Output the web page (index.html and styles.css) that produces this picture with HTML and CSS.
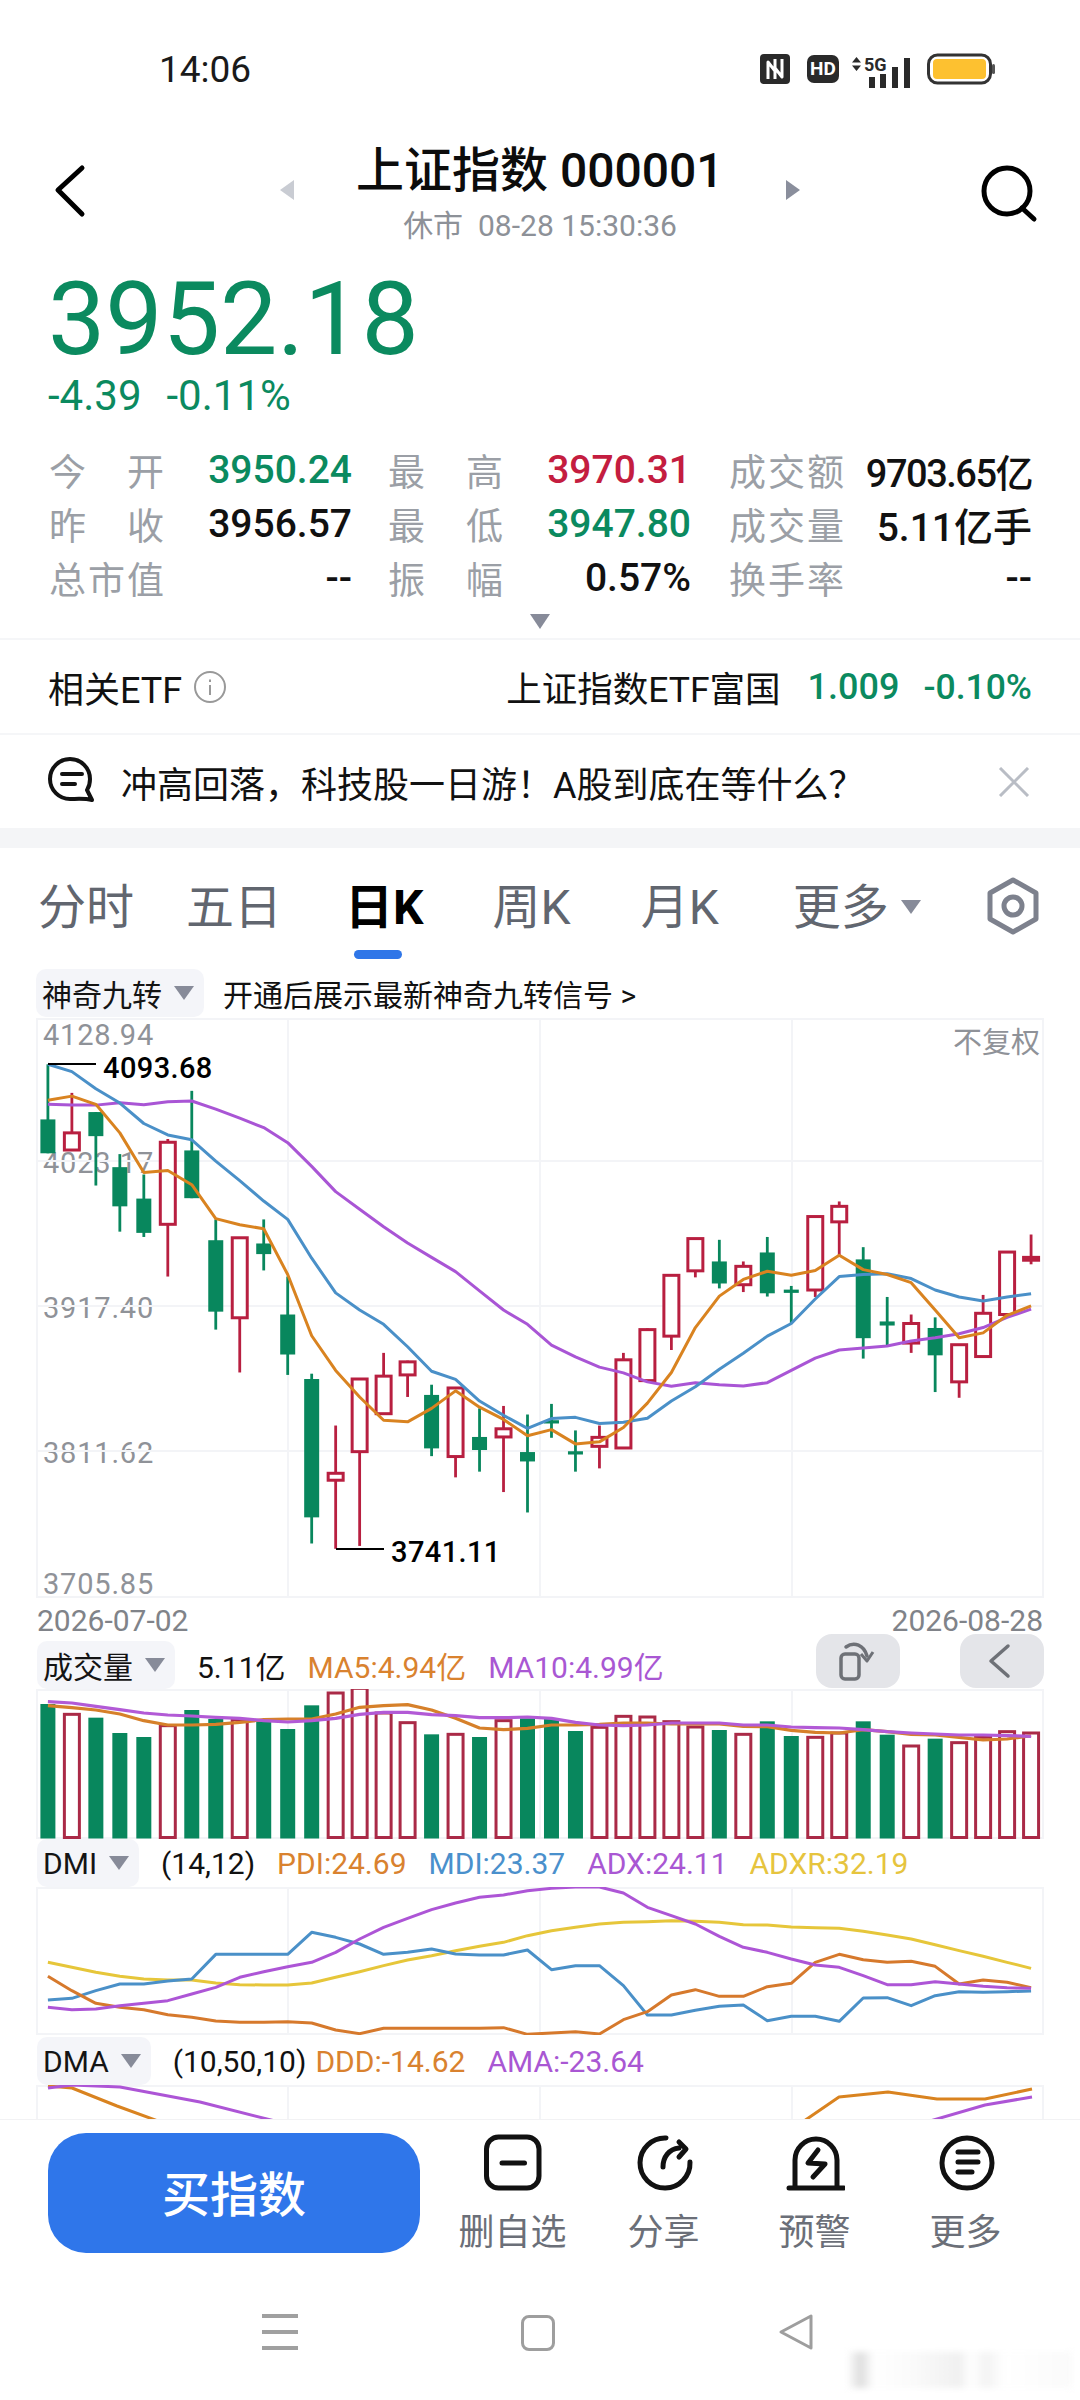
FILE: index.html
```html
<!DOCTYPE html>
<html lang="zh-CN">
<head>
    <meta charset="UTF-8">
    <meta name="viewport" content="width=device-width, initial-scale=1.0">
    <title>上证指数 000001</title>
    <link rel="stylesheet" href="styles.css">
</head>
<body>
    <div class="page">
        <div class="status">
            <span class="status-time">14:06</span>
            <div class="status-icons">
                <svg class="ic-nfc" width="30" height="30" viewBox="0 0 30 30">
                    <rect width="30" height="30" rx="4" fill="#2a2a2a"/>
                    <path d="M8 25V8l7 9V5M15 25V14l7 9V5" fill="none" stroke="#fff" stroke-width="3" stroke-linejoin="round"/>
                </svg>
                <span class="ic-hd">HD</span>
                <svg class="ic-signal" width="60" height="38" viewBox="0 -6 60 38">
                    <path d="M1 6.500L5.500 1 10 6.500zM1 9.500L5.500 15 10 9.500z" fill="#2a2a2a"/>
                    <text class="signal-text" x="13" y="15">5G</text>
                    <rect x="18" y="21" width="6" height="11" fill="#2a2a2a"/>
                    <rect x="29" y="18" width="6" height="14" fill="#2a2a2a"/>
                    <rect x="41" y="11" width="6" height="21" fill="#2a2a2a"/>
                    <rect x="53" y="2" width="6" height="30" fill="#2a2a2a"/>
                </svg>
                <svg class="ic-battery" width="68" height="32" viewBox="0 0 68 32">
                    <rect x="1.500" y="2" width="62" height="28" rx="9" fill="none" stroke="#333" stroke-width="3"/>
                    <rect x="6" y="6" width="53" height="20" rx="4" fill="#fdc130"/>
                    <rect x="65" y="11" width="3" height="10" rx="1.500" fill="#555"/>
                </svg>
            </div>
        </div>

        <div class="nav">
            <svg class="nav-back" width="40" height="56" viewBox="0 0 40 56">
                <path d="M32 5L8 27l24 24" fill="none" stroke="#000" stroke-width="5" stroke-linecap="round" stroke-linejoin="round"/>
            </svg>
            <div class="nav-mid">
                <span class="arrow-left"></span>
                <div class="nav-titles">
                    <div class="nav-title">上证指数 000001</div>
                    <div class="nav-sub">休市&nbsp; 08-28 15:30:36</div>
                </div>
                <span class="arrow-right"></span>
            </div>
            <svg class="nav-search" width="60" height="60" viewBox="0 0 60 60">
                <circle cx="27" cy="27" r="23" fill="none" stroke="#000" stroke-width="5"/>
                <path d="M42 44l12 11" fill="none" stroke="#000" stroke-width="5" stroke-linecap="round"/>
            </svg>
        </div>

        <div class="quote">
            <div class="quote-price">3952.18</div>
            <div class="quote-change"><span>-4.39</span><span>-0.11%</span></div>
        </div>

        <div class="stats">
            <div class="stat"><span class="stat-label">今 开</span><span class="stat-value green">3950.24</span></div>
            <div class="stat"><span class="stat-label">最 高</span><span class="stat-value red">3970.31</span></div>
            <div class="stat"><span class="stat-label">成交额</span><span class="stat-value stat-squeezed">9703.65亿</span></div>
            <div class="stat"><span class="stat-label">昨 收</span><span class="stat-value">3956.57</span></div>
            <div class="stat"><span class="stat-label">最 低</span><span class="stat-value green">3947.80</span></div>
            <div class="stat"><span class="stat-label">成交量</span><span class="stat-value">5.11亿手</span></div>
            <div class="stat"><span class="stat-label">总市值</span><span class="stat-value">--</span></div>
            <div class="stat"><span class="stat-label">振 幅</span><span class="stat-value">0.57%</span></div>
            <div class="stat"><span class="stat-label">换手率</span><span class="stat-value">--</span></div>
        </div>
        <div class="stats-more"><span class="tri tri-big"></span></div>

        <div class="etf">
            <span class="etf-label">相关ETF</span>
            <svg class="etf-info" width="34" height="34" viewBox="0 0 34 34">
                <circle cx="17" cy="17" r="15" fill="none" stroke="#999" stroke-width="2"/>
                <path d="M17 15v10M17 9.500v2.500" fill="none" stroke="#999" stroke-width="2"/>
            </svg>
            <span class="etf-name">上证指数ETF富国</span>
            <span class="etf-num green">1.009</span>
            <span class="etf-num etf-pct green">-0.10%</span>
        </div>

        <div class="news">
            <svg class="news-icon" width="48" height="48" viewBox="0 0 48 48">
                <path d="M44 23A20 20 0 1 0 24 43C30 43 38 42 46 44L41 34C43 31 44 27 44 23Z" fill="none" stroke="#111" stroke-width="4" stroke-linejoin="round"/>
                <path d="M16 18h20M16 28h13" fill="none" stroke="#111" stroke-width="4" stroke-linecap="round"/>
            </svg>
            <span class="news-text">冲高回落，科技股一日游！A股到底在等什么？</span>
            <svg class="news-close" width="32" height="30" viewBox="0 0 32 30">
                <path d="M2 1l28 28M30 1L2 29" fill="none" stroke="#b9bdc5" stroke-width="3"/>
            </svg>
        </div>

        <div class="band"></div>

        <div class="tabs">
            <span class="tab">分时</span>
            <span class="tab">五日</span>
            <span class="tab tab-active">日K</span>
            <span class="tab">周K</span>
            <span class="tab">月K</span>
            <span class="tab">更多<span class="tri tri-tab"></span></span>
            <svg class="tab-gear" width="56" height="60" viewBox="0 0 56 60">
                <path d="M28 4l23 13v26L28 56 5 43V17z" fill="none" stroke="#7d818d" stroke-width="5" stroke-linejoin="round"/>
                <circle cx="28" cy="30" r="9" fill="none" stroke="#7d818d" stroke-width="5"/>
            </svg>
        </div>

        <div class="signal">
            <span class="chip chip-signal">神奇九转<span class="tri"></span></span>
            <span class="signal-note">开通后展示最新神奇九转信号 &gt;</span>
        </div>

        <div class="chart">
            <span class="axis axis-1">4128.94</span>
            <span class="axis axis-2">4023.17</span>
            <span class="axis axis-3">3917.40</span>
            <span class="axis axis-4">3811.62</span>
            <span class="axis axis-5">3705.85</span>
            <svg id="priceChart" class="panel-svg chart-svg" width="1008" height="580"></svg>
            <span class="mark mark-high">4093.68</span>
            <span class="mark mark-low">3741.11</span>
            <span class="chart-adjust">不复权</span>
        </div>

        <div class="dates"><span>2026-07-02</span><span>2026-08-28</span></div>

        <div class="ind-head">
            <span class="chip">成交量<span class="tri"></span></span>
            <span class="ind-val">5.11亿</span>
            <span class="c-orange">MA5:4.94亿</span>
            <span class="c-purple">MA10:4.99亿</span>
            <div class="ind-tools">
                <span class="tool">
                    <svg width="44" height="44" viewBox="0 0 44 44">
                        <rect x="5" y="15" width="18" height="25" rx="4" fill="none" stroke="#6e7177" stroke-width="3.500"/>
                        <path d="M10 8C18 2 28 6 31 17" fill="none" stroke="#6e7177" stroke-width="3.500" stroke-linecap="round"/>
                        <path d="M25 15l6 7 6-9" fill="none" stroke="#6e7177" stroke-width="3" stroke-linejoin="round"/>
                    </svg>
                </span>
                <span class="tool">
                    <svg width="44" height="44" viewBox="0 0 44 44">
                        <path d="M28 7L11 22l17 15" fill="none" stroke="#6e7177" stroke-width="3.500" stroke-linecap="round" stroke-linejoin="round"/>
                    </svg>
                </span>
            </div>
        </div>
        <svg id="volChart" class="panel-svg" width="1008" height="150"></svg>

        <div class="ind-head">
            <span class="chip">DMI<span class="tri"></span></span>
            <span class="ind-val">(14,12)</span>
            <span class="c-orange">PDI:24.69</span>
            <span class="c-blue">MDI:23.37</span>
            <span class="c-purple">ADX:24.11</span>
            <span class="c-yellow">ADXR:32.19</span>
        </div>
        <svg id="dmiChart" class="panel-svg" width="1008" height="148"></svg>

        <div class="ind-head ind-dma">
            <span class="chip">DMA<span class="tri"></span></span>
            <span class="ind-val">(10,50,10)</span>
            <span class="c-orange">DDD:-14.62</span>
            <span class="c-purple">AMA:-23.64</span>
        </div>
        <div class="dma-clip">
            <svg id="dmaChart" class="panel-svg" width="1008" height="150"></svg>
        </div>

        <div class="actions">
            <button class="buy">买指数</button>
            <div class="action">
                <svg width="60" height="60" viewBox="0 0 60 60">
                    <rect x="3.500" y="4" width="52.500" height="51" rx="12" fill="none" stroke="#111" stroke-width="5"/>
                    <path d="M19 30h22.500" fill="none" stroke="#111" stroke-width="5" stroke-linecap="round"/>
                </svg>
                <span>删自选</span>
            </div>
            <div class="action">
                <svg width="60" height="60" viewBox="0 0 60 60">
                    <path d="M32 5A25 25 0 1 0 56 29" fill="none" stroke="#111" stroke-width="5" stroke-linecap="round"/>
                    <path d="M29 34C29 24 35 16 45 15M45 9l7 7-7 8" fill="none" stroke="#111" stroke-width="5" stroke-linecap="round" stroke-linejoin="round"/>
                </svg>
                <span>分享</span>
            </div>
            <div class="action">
                <svg width="60" height="60" viewBox="0 0 60 60">
                    <path d="M10 55V27A21 21 0 0 1 52 27V55" fill="none" stroke="#111" stroke-width="5"/>
                    <path d="M4 55H59" fill="none" stroke="#111" stroke-width="5" stroke-linecap="round"/>
                    <path d="M33 17L23 30L40 31L28 44" fill="none" stroke="#111" stroke-width="5" stroke-linecap="round" stroke-linejoin="round"/>
                </svg>
                <span>预警</span>
            </div>
            <div class="action">
                <svg width="60" height="60" viewBox="0 0 60 60">
                    <circle cx="31" cy="30" r="25" fill="none" stroke="#111" stroke-width="5"/>
                    <path d="M22 19h20M22 29h20M22 39h14" fill="none" stroke="#111" stroke-width="5" stroke-linecap="round"/>
                </svg>
                <span>更多</span>
            </div>
        </div>

        <div class="sysnav">
            <span class="sys-menu"></span>
            <span class="sys-home"></span>
            <svg class="sys-back" width="36" height="38" viewBox="0 0 36 38">
                <path d="M33 3V35L3 19z" fill="none" stroke="#9e9e9e" stroke-width="3" stroke-linejoin="round"/>
            </svg>
            <span class="sys-smudge"></span>
        </div>
    </div>
    <script src="chart.js"></script>
</body>
</html>
```

FILE: styles.css
```css
html, body {
    margin: 0;
    padding: 0;
    background: #fff;
}
body {
    font-family: Roboto, "Noto Sans CJK SC", sans-serif;
    color: #111;
}
.page {
    width: 1080px;
    height: 2400px;
    overflow: hidden;
    display: flex;
    flex-direction: column;
}
.green { color: #0b8a5f; }
.red { color: #c41d40; }
.c-orange { color: #d9822f; }
.c-purple { color: #a957d3; }
.c-blue { color: #4a90cc; }
.c-yellow { color: #e6c43e; }

/* status bar */
.status {
    height: 136px;
    flex-shrink: 0;
    display: flex;
    align-items: center;
    padding: 2px 85px 0 159px;
    box-sizing: border-box;
}
.status-time {
    font-size: 37px;
    color: #1a1a1a;
}
.status-icons {
    margin-left: auto;
    display: flex;
    align-items: center;
}
.ic-hd {
    width: 32px;
    height: 28px;
    margin: 0 12px 0 17px;
    background: #2a2a2a;
    border-radius: 7px;
    color: #fff;
    font-size: 19px;
    font-weight: 700;
    line-height: 28px;
    text-align: center;
}
.signal-text {
    font-family: Roboto, sans-serif;
    font-size: 18px;
    font-weight: 700;
    fill: #2a2a2a;
}
.ic-battery { margin-left: 16px; }

/* header */
.nav {
    height: 120px;
    flex-shrink: 0;
    display: grid;
    grid-template-columns: 1fr auto 1fr;
    padding: 0 45px;
}
.nav-back {
    margin: 27px 0 0 5px;
}
.nav-search {
    justify-self: end;
    margin: 28px -5px 0 0;
}
.nav-mid {
    display: flex;
    align-items: flex-start;
    gap: 66px;
}
.arrow-left, .arrow-right {
    width: 0;
    height: 0;
    margin-top: 44px;
    border-top: 10px solid transparent;
    border-bottom: 10px solid transparent;
}
.arrow-left { border-right: 14px solid #c9ccd3; }
.arrow-right { border-left: 14px solid #8a8e9c; }
.nav-titles {
    width: 360px;
    text-align: center;
    white-space: nowrap;
}
.nav-title {
    margin: 8px 0 0 -4px;
    font-size: 48px;
    font-weight: 500;
    line-height: 54px;
    color: #0c0c0c;
}
.nav-sub {
    margin-top: 10px;
    font-size: 30px;
    line-height: 36px;
    color: #8d9198;
}

/* quote */
.quote {
    flex-shrink: 0;
    padding-left: 48px;
    color: #0b8a5f;
}
.quote-price {
    margin-top: 13px;
    font-size: 102px;
    line-height: 100px;
}
.quote-change {
    margin-top: 3px;
    display: flex;
    gap: 25px;
    font-size: 42px;
    line-height: 48px;
}
.stats {
    margin-top: 23px;
    flex-shrink: 0;
    display: grid;
    grid-template-columns: 339px 341px 303px;
    grid-auto-rows: 54px;
    padding-left: 49px;
    font-size: 39px;
}
.stat {
    display: flex;
    align-items: center;
    justify-content: space-between;
    white-space: nowrap;
}
.stat:nth-child(3n+1) { padding-right: 36px; }
.stat:nth-child(3n+2) { padding-right: 38px; }
.stat-label {
    width: 115px;
    text-align: justify;
    text-align-last: justify;
    color: #9b9fa6;
    font-size: 37px;
}
.stat-value { font-weight: 500; }
.stat-squeezed {
    font-size: 38px;
    letter-spacing: -1.5px;
}
.stats-more {
    height: 33px;
    flex-shrink: 0;
    display: flex;
    align-items: center;
    justify-content: center;
    border-bottom: 2px solid #f5f6f8;
}
.tri {
    display: inline-block;
    width: 0;
    height: 0;
    border-left: 10px solid transparent;
    border-right: 10px solid transparent;
    border-top: 14px solid #878b99;
}
.tri-big {
    border-top-width: 15px;
}

/* related etf and news */
.etf {
    height: 95px;
    flex-shrink: 0;
    box-sizing: border-box;
    display: flex;
    align-items: center;
    padding: 0 48px 0 48px;
    font-size: 36px;
    border-bottom: 2px solid #f5f6f8;
}
.etf-info { margin-left: 11px; }
.etf-name {
    margin-left: auto;
    font-size: 35.500px;
}
.etf-num {
    margin-left: 27px;
    font-size: 36px;
    font-weight: 500;
}
.etf-pct {
    margin-left: 24px;
    font-size: 35.500px;
}
.news {
    height: 93px;
    flex-shrink: 0;
    display: flex;
    align-items: center;
    padding: 0 50px 0 46px;
    font-size: 36px;
}
.news-icon { margin-top: -4px; }
.news-text {
    margin-left: 27px;
    white-space: nowrap;
}
.news-close { margin-left: auto; }
.band {
    height: 20px;
    flex-shrink: 0;
    background: #f4f5f7;
}

/* period tabs */
.tabs {
    height: 119px;
    flex-shrink: 0;
    display: flex;
    align-items: flex-start;
    padding: 32px 0 0 38px;
    box-sizing: border-box;
    font-size: 48px;
    line-height: 56px;
    color: #61666f;
}
.tab {
    position: relative;
    white-space: nowrap;
}
.tab:nth-child(2) { margin-left: 52px; }
.tab:nth-child(3) { margin-left: 63px; }
.tab:nth-child(4) { margin-left: 69px; }
.tab:nth-child(5) { margin-left: 70px; }
.tab:nth-child(6) { margin-left: 74px; }
.tab-active {
    color: #000;
    font-weight: 700;
}
.tab-active::after {
    content: "";
    position: absolute;
    left: 9px;
    top: 70px;
    width: 48px;
    height: 9px;
    border-radius: 5px;
    background: #2f76e8;
}
.tri-tab {
    margin: 0 0 10px 12px;
}
.tab-gear {
    margin: -4px 39px 0 auto;
}
.signal {
    height: 51px;
    flex-shrink: 0;
    display: flex;
    align-items: center;
    padding-left: 36px;
    font-size: 30px;
    white-space: nowrap;
}
.chip {
    height: 48px;
    box-sizing: border-box;
    display: inline-flex;
    align-items: center;
    padding: 0 10px 0 6px;
    background: #f4f5f9;
    border-radius: 10px;
    color: #141414;
}
.chip .tri {
    margin-left: 12px;
}
.signal-note { margin-left: 19px; }

/* charts */
.panel-svg {
    display: block;
    margin-left: 36px;
    flex-shrink: 0;
}
.chart {
    position: relative;
    height: 580px;
    flex-shrink: 0;
}
.chart-svg {
    position: relative;
    z-index: 1;
}
.axis, .mark, .chart-adjust {
    position: absolute;
    font-size: 29px;
    line-height: 30px;
    letter-spacing: 0.8px;
    white-space: nowrap;
}
.axis {
    left: 43px;
    color: #8f9298;
}
.axis-1 { top: 2px; }
.axis-2 { top: 130px; }
.axis-3 { top: 275px; }
.axis-4 { top: 420px; }
.axis-5 { top: 551px; }
.mark {
    z-index: 2;
    color: #000;
    font-weight: 500;
    letter-spacing: 0.4px;
}
.mark-high { left: 103px; top: 35px; }
.mark-low { left: 391px; top: 519px; }
.chart-adjust {
    z-index: 2;
    right: 40px;
    top: 10px;
    letter-spacing: 0;
    color: #8f9298;
}
.dates {
    height: 43px;
    flex-shrink: 0;
    display: flex;
    justify-content: space-between;
    padding: 0 37px;
    font-size: 30px;
    line-height: 46px;
    color: #808389;
}
.ind-head {
    height: 48px;
    flex-shrink: 0;
    display: flex;
    align-items: center;
    gap: 22px;
    padding-left: 37px;
    font-size: 30px;
    white-space: nowrap;
}
.ind-val {
    color: #111;
}
.ind-dma { margin-top: 2px; }
.ind-dma .ind-val + span { margin-left: -13px; }
.ind-tools {
    margin: -7px 36px 0 auto;
    align-self: flex-start;
    display: flex;
    gap: 60px;
}
.tool {
    width: 84px;
    height: 54px;
    display: flex;
    align-items: center;
    justify-content: center;
    background: #e4e5e9;
    border-radius: 16px;
}
.dma-clip {
    height: 34px;
    flex-shrink: 0;
    overflow: hidden;
}

/* bottom bar */
.actions {
    height: 170px;
    flex-shrink: 0;
    box-sizing: border-box;
    display: flex;
    align-items: flex-start;
    padding: 13px 0 0 48px;
    border-top: 1px solid #f2f2f4;
}
.buy {
    width: 372px;
    height: 120px;
    margin-right: 17px;
    padding: 0 0 4px;
    border: 0;
    border-radius: 38px;
    background: #2f76ea;
    color: #fff;
    font-family: inherit;
    font-size: 48px;
    font-weight: 500;
}
.action {
    width: 151px;
    display: flex;
    flex-direction: column;
    align-items: center;
    font-size: 36px;
    line-height: 44px;
    color: #6b6f78;
}
.action span { margin-top: 18px; }
.sysnav {
    position: relative;
    flex: 1;
}
.sys-menu {
    position: absolute;
    left: 262px;
    top: 25px;
    width: 36px;
    height: 36px;
    background: linear-gradient(#a0a0a0 4px, transparent 4px, transparent 16px, #a0a0a0 16px, #a0a0a0 20px, transparent 20px, transparent 32px, #a0a0a0 32px);
}
.sys-home {
    position: absolute;
    left: 521px;
    top: 26px;
    width: 28px;
    height: 30px;
    border: 3px solid #9e9e9e;
    border-radius: 8px;
}
.sys-back {
    position: absolute;
    left: 778px;
    top: 24px;
}
.sys-smudge {
    position: absolute;
    left: 847px;
    top: 63px;
    width: 225px;
    height: 36px;
    filter: blur(3px);
    background: linear-gradient(90deg, #fff, #ddd 6%, #fff 12%, #fafafa 30%, #f0f0f0 50%, #fff 55%, #f3f3f3 62%, #fff 70%, #fafafa 100%);
}
```

FILE: chart.js
```js
const GREEN = "#08875d";
const RED = "#b81f40";
const GRID = "#f3f4f7";
const NS = "http://www.w3.org/2000/svg";

// candles: [high, bodyTop, bodyBottom, low, up?] in the chart's own y units
const candles = [
    [160, 295, 378, 378, 0], [230, 328, 370, 370, 1], [277, 277, 336, 457, 0], [380, 412, 508, 570, 0],
    [430, 489, 573, 583, 0], [343, 351, 552, 680, 1], [225, 371, 488, 488, 0], [540, 591, 766, 810, 0],
    [585, 585, 781, 915, 1], [540, 599, 625, 665, 0], [680, 773, 871, 921, 0], [918, 931, 1270, 1334, 0],
    [1045, 1162, 1179, 1347, 1], [931, 931, 1109, 1340, 1], [867, 924, 1016, 1016, 1], [886, 889, 921, 975, 1],
    [945, 970, 1101, 1120, 0], [953, 953, 1121, 1172, 1], [1003, 1073, 1105, 1158, 0], [997, 1053, 1073, 1208, 1],
    [1018, 1110, 1133, 1258, 0], [992, 1032, 1040, 1075, 0], [1057, 1108, 1116, 1158, 0], [1045, 1074, 1096, 1150, 1],
    [867, 884, 1100, 1100, 1], [807, 810, 935, 935, 1], [677, 677, 826, 860, 1], [587, 587, 666, 682, 1],
    [590, 643, 697, 709, 0], [643, 655, 700, 718, 1], [583, 621, 721, 729, 0], [703, 712, 720, 795, 0],
    [533, 533, 713, 730, 1], [496, 508, 546, 630, 1], [608, 638, 831, 881, 0], [730, 790, 800, 850, 0],
    [773, 795, 843, 867, 1], [780, 806, 873, 963, 0], [847, 847, 938, 977, 1], [725, 770, 876, 876, 1],
    [620, 620, 773, 773, 1], [577, 633, 640, 650, 1]
];
const maPurple = [258, 260, 260, 254, 259, 252, 250, 270, 292, 315, 352, 410, 472, 515, 558, 598, 633, 668, 715, 762, 797,
    848, 877, 902, 916, 938, 949, 940, 945, 948, 940, 910, 880, 860, 855, 850, 838, 830, 820, 805, 780, 760];
const maBlue = [160, 178, 220, 255, 305, 333, 345, 397, 445, 495, 540, 635, 720, 762, 797, 852, 912, 932, 985, 1020, 1052,
    1028, 1025, 1040, 1037, 1027, 985, 950, 907, 868, 826, 795, 735, 680, 675, 673, 685, 713, 730, 740, 730, 722];
const maOrange = [248, 238, 258, 328, 425, 420, 455, 538, 553, 563, 675, 825, 910, 975, 1032, 1036, 1003, 960, 1000, 1030, 1070,
    1055, 1090, 1085, 1050, 990, 915, 805, 728, 687, 667, 677, 665, 628, 663, 675, 695, 762, 830, 818, 775, 752];

// volume tops, matching the candle colour by index
const volumes = [315, 346, 356, 402, 414, 380, 333, 360, 362, 367, 390, 319, 282, 268, 342, 371, 406, 406, 414, 365, 358,
    360, 396, 385, 352, 354, 368, 384, 393, 406, 367, 411, 415, 402, 367, 407, 441, 419, 431, 415, 398, 402];
const volPurple = [308, 312, 322, 332, 342, 348, 351, 355, 358, 365, 369, 365, 358, 346, 340, 340, 347, 350, 356, 356, 354,
    358, 370, 378, 380, 378, 372, 372, 372, 378, 378, 384, 386, 387, 392, 398, 402, 405, 408, 408, 410, 412];
const volOrange = [320, 326, 333, 345, 365, 378, 378, 376, 370, 362, 360, 360, 345, 325, 320, 317, 333, 358, 387, 392, 388,
    378, 378, 376, 372, 372, 375, 375, 375, 382, 383, 394, 400, 402, 392, 398, 406, 408, 415, 423, 420, 410];

const dmiYellow = [1090, 1105, 1120, 1132, 1140, 1143, 1143, 1152, 1157, 1158, 1158, 1152, 1135, 1118, 1100, 1083, 1070, 1055, 1042, 1030, 1010,
    995, 985, 975, 970, 968, 965, 967, 970, 977, 978, 984, 986, 988, 997, 1008, 1020, 1037, 1055, 1072, 1090, 1108];
const dmiBlue = [1203, 1198, 1175, 1155, 1155, 1146, 1140, 1066, 1066, 1066, 1066, 1000, 1015, 1035, 1066, 1060, 1050, 1065, 1068, 1068, 1053,
    1112, 1100, 1100, 1160, 1248, 1248, 1234, 1222, 1218, 1265, 1252, 1252, 1267, 1197, 1196, 1220, 1190, 1178, 1180, 1178, 1176];
const dmiPurple = [1225, 1232, 1230, 1220, 1213, 1205, 1185, 1165, 1135, 1118, 1103, 1090, 1060, 1020, 985, 958, 932, 912, 895, 888, 875,
    868, 864, 864, 882, 925, 950, 975, 1012, 1045, 1060, 1080, 1098, 1105, 1130, 1157, 1157, 1148, 1155, 1162, 1166, 1168];
const dmiOrange = [1132, 1175, 1213, 1225, 1232, 1247, 1255, 1266, 1270, 1270, 1268, 1272, 1293, 1304, 1288, 1288, 1288, 1288, 1288, 1286, 1306,
    1302, 1298, 1305, 1262, 1238, 1188, 1172, 1192, 1192, 1163, 1153, 1090, 1066, 1082, 1090, 1087, 1102, 1155, 1143, 1150, 1166];

function el(parent, name, attrs) {
    const node = document.createElementNS(NS, name);
    for (const key in attrs) node.setAttribute(key, attrs[key]);
    parent.appendChild(node);
    return node;
}

function xAt(i) {
    return 11.9 + 23.98 * i;
}

function drawGrid(svg, height, rows) {
    el(svg, "rect", { x: 1, y: 1, width: 1006, height: height - 2, fill: "none", stroke: GRID, "stroke-width": 2 });
    for (const x of [252, 504, 756]) {
        el(svg, "line", { x1: x, x2: x, y1: 0, y2: height, stroke: GRID, "stroke-width": 2 });
    }
    for (const y of rows) {
        el(svg, "line", { x1: 0, x2: 1008, y1: y, y2: y, stroke: GRID, "stroke-width": 2 });
    }
}

function drawLine(svg, points, color, width) {
    el(svg, "polyline", {
        points: points.map((p) => p.join(",")).join(" "),
        fill: "none",
        stroke: color,
        "stroke-width": width,
        "stroke-linejoin": "round"
    });
}

function series(values, scale) {
    return values.map((v, i) => [xAt(i), scale(v)]);
}

// price panel
const price = document.getElementById("priceChart");
const priceY = (v) => v / 2.45 - 19;
drawGrid(price, 580, [143, 288, 433]);
candles.forEach((c, i) => {
    const x = xAt(i);
    const color = c[4] ? RED : GREEN;
    el(price, "line", { x1: x, x2: x, y1: priceY(c[0]), y2: priceY(c[3]), stroke: color, "stroke-width": 2.8 });
    const top = priceY(c[1]);
    const h = priceY(c[2]) - top;
    if (c[4]) {
        el(price, "rect", { x: x - 7.5, y: top, width: 15, height: h, fill: "#fff", stroke: color, "stroke-width": 3 });
    } else {
        el(price, "rect", { x: x - 7.5, y: top, width: 15, height: h, fill: color });
    }
});
drawLine(price, series(maPurple, priceY), "#a955d5", 3);
drawLine(price, series(maBlue, priceY), "#4a90c8", 3);
drawLine(price, series(maOrange, priceY), "#d98320", 3);
el(price, "line", { x1: 12, x2: 60, y1: 46, y2: 46, stroke: "#000", "stroke-width": 2 });
el(price, "line", { x1: 300, x2: 348, y1: 531, y2: 531, stroke: "#000", "stroke-width": 2 });

// volume panel
const vol = document.getElementById("volChart");
const volY = (v) => v / 3 - 90;
drawGrid(vol, 150, []);
volumes.forEach((v, i) => {
    const x = xAt(i);
    const top = volY(v);
    if (candles[i][4]) {
        el(vol, "rect", { x: x - 7.5, y: top, width: 15, height: 148.5 - top, fill: "#fff", stroke: "#aa2a47", "stroke-width": 3 });
    } else {
        el(vol, "rect", { x: x - 7.5, y: top, width: 15, height: 149.5 - top, fill: GREEN });
    }
});
drawLine(vol, series(volOrange, volY), "#d6802a", 3.2);
drawLine(vol, series(volPurple, volY), "#b25ad6", 3.2);

// dmi panel
const dmi = document.getElementById("dmiChart");
const dmiY = (v) => v / 3 - 288;
drawGrid(dmi, 148, []);
drawLine(dmi, series(dmiYellow, dmiY), "#e6c63a", 3);
drawLine(dmi, series(dmiBlue, dmiY), "#4a90c8", 3);
drawLine(dmi, series(dmiOrange, dmiY), "#d6792c", 3);
drawLine(dmi, series(dmiPurple, dmiY), "#ad55d6", 3);

// dma panel, only its top edge is visible above the bottom bar
const dma = document.getElementById("dmaChart");
drawGrid(dma, 150, []);
drawLine(dma, [[12, 1], [36, 3], [81, 21], [122, 36]], "#d98320", 3);
drawLine(dma, [[12, 3], [36, 0], [84, 2], [164, 17], [239, 36]], "#ad55d6", 3);
drawLine(dma, [[768, 36], [803, 12], [852, 7], [901, 14], [949, 14], [996, 4]], "#d98320", 3);
drawLine(dma, [[894, 36], [949, 20], [996, 12]], "#ad55d6", 3);
```
